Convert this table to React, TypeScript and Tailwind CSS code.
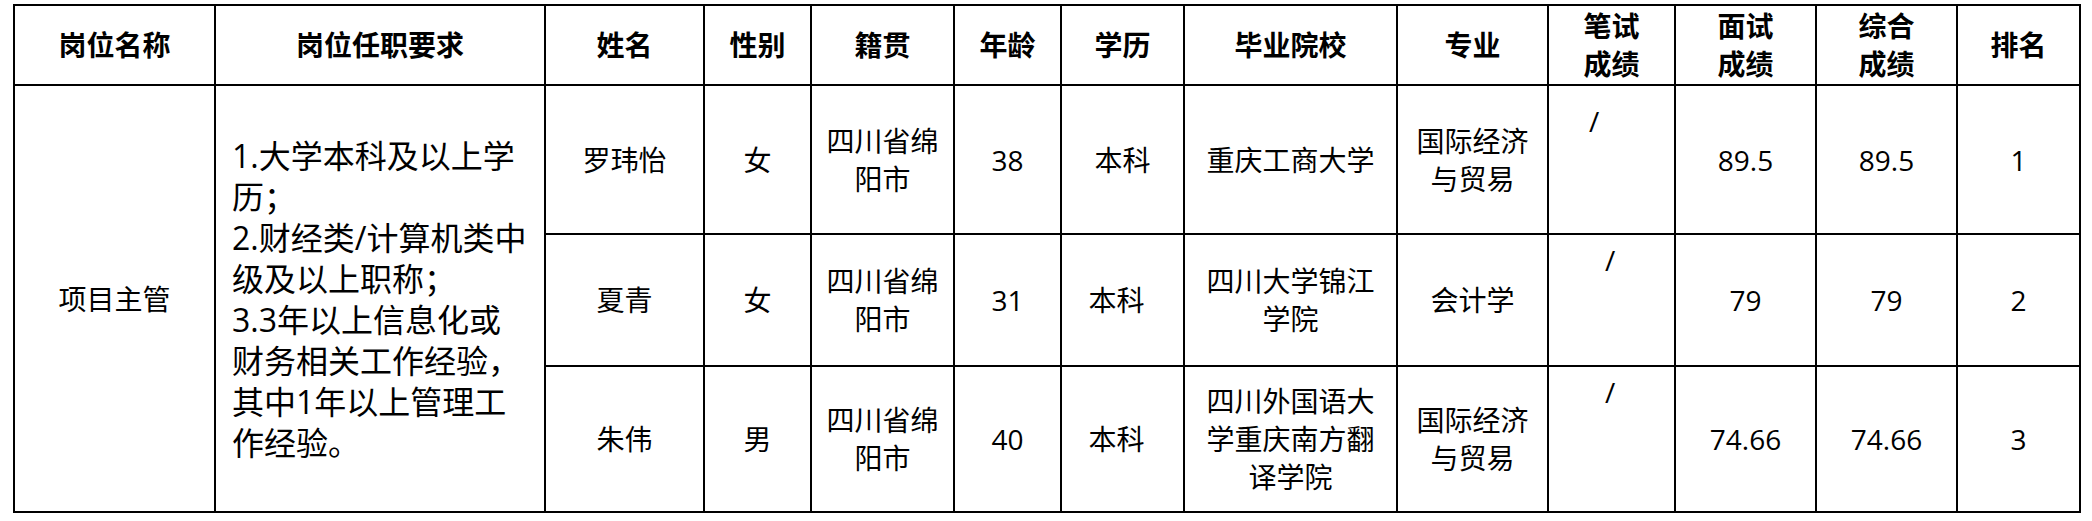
const requirements = [
  "1.大学本科及以上学",
  "历；",
  "2.财经类/计算机类中",
  "级及以上职称；",
  "3.3年以上信息化或",
  "财务相关工作经验，",
  "其中1年以上管理工",
  "作经验。",
];

type Row = {
  name: string;
  sex: string;
  origin: string[];
  age: string;
  edu: string;
  school: string[];
  major: string[];
  interview: string;
  total: string;
  rank: string;
};

const rows: Row[] = [
  {
    name: "罗玮怡",
    sex: "女",
    origin: ["四川省绵", "阳市"],
    age: "38",
    edu: "本科",
    school: ["重庆工商大学"],
    major: ["国际经济", "与贸易"],
    interview: "89.5",
    total: "89.5",
    rank: "1",
  },
  {
    name: "夏青",
    sex: "女",
    origin: ["四川省绵", "阳市"],
    age: "31",
    edu: "本科",
    school: ["四川大学锦江", "学院"],
    major: ["会计学"],
    interview: "79",
    total: "79",
    rank: "2",
  },
  {
    name: "朱伟",
    sex: "男",
    origin: ["四川省绵", "阳市"],
    age: "40",
    edu: "本科",
    school: ["四川外国语大", "学重庆南方翻", "译学院"],
    major: ["国际经济", "与贸易"],
    interview: "74.66",
    total: "74.66",
    rank: "3",
  },
];

const rowHeights = ["h-[149px]", "h-[132px]", "h-[146px]"];

const Lines = ({ lines }: { lines: string[] }) => (
  <>
    {lines.map((l, i) => (
      <div key={i} className="whitespace-nowrap">
        {l}
      </div>
    ))}
  </>
);

const cell = "border-2 border-black text-center align-middle p-0";

const App = () => {
  return (
    <div className="w-[2092px] h-[521px] bg-white pt-[4px] pl-[13px] font-[family-name:'Open_Sans','Noto_Sans_CJK_SC',sans-serif] text-black">
      <table className="table-fixed border-collapse w-[2066px] text-[28px] leading-[38px]">
        <colgroup>
          <col className="w-[201px]" />
          <col className="w-[330px]" />
          <col className="w-[159px]" />
          <col className="w-[107px]" />
          <col className="w-[143px]" />
          <col className="w-[107px]" />
          <col className="w-[123px]" />
          <col className="w-[213px]" />
          <col className="w-[151px]" />
          <col className="w-[127px]" />
          <col className="w-[141px]" />
          <col className="w-[141px]" />
          <col className="w-[123px]" />
        </colgroup>
        <thead>
          <tr className="h-[80px] font-bold">
            <th className={cell}>岗位名称</th>
            <th className={cell}>岗位任职要求</th>
            <th className={cell}>姓名</th>
            <th className={cell}>性别</th>
            <th className={cell}>籍贯</th>
            <th className={cell}>年龄</th>
            <th className={cell}>学历</th>
            <th className={cell}>毕业院校</th>
            <th className={cell}>专业</th>
            <th className={cell}>
              <Lines lines={["笔试", "成绩"]} />
            </th>
            <th className={cell}>
              <Lines lines={["面试", "成绩"]} />
            </th>
            <th className={cell}>
              <Lines lines={["综合", "成绩"]} />
            </th>
            <th className={cell}>排名</th>
          </tr>
        </thead>
        <tbody>
          {rows.map((r, i) => (
            <tr key={i} className={rowHeights[i]}>
              {i === 0 && (
                <>
                  <td rowSpan={3} className={cell}>
                    项目主管
                  </td>
                  <td
                    rowSpan={3}
                    className="border-2 border-black text-left align-middle pl-[16px] text-[32px] leading-[41px]"
                  >
                    <Lines lines={requirements} />
                  </td>
                </>
              )}
              <td className={cell}>{r.name}</td>
              <td className={cell}>{r.sex}</td>
              <td className={cell}>
                <Lines lines={r.origin} />
              </td>
              <td className={cell}>{r.age}</td>
              <td className={i === 0 ? cell : `${cell} pr-[12px]`}>{r.edu}</td>
              <td className={cell}>
                <Lines lines={r.school} />
              </td>
              <td className={cell}>
                <Lines lines={r.major} />
              </td>
              {/* the slash sits near the top of the cell, as in the source doc */}
              <td
                className={
                  i === 0
                    ? "border-2 border-black text-left align-top pl-[40px] pt-[16px]"
                    : "border-2 border-black text-left align-top pl-[56px] pt-[6px]"
                }
              >
                /
              </td>
              <td className={cell}>{r.interview}</td>
              <td className={cell}>{r.total}</td>
              <td className={cell}>{r.rank}</td>
            </tr>
          ))}
        </tbody>
      </table>
    </div>
  );
};

export default App;
